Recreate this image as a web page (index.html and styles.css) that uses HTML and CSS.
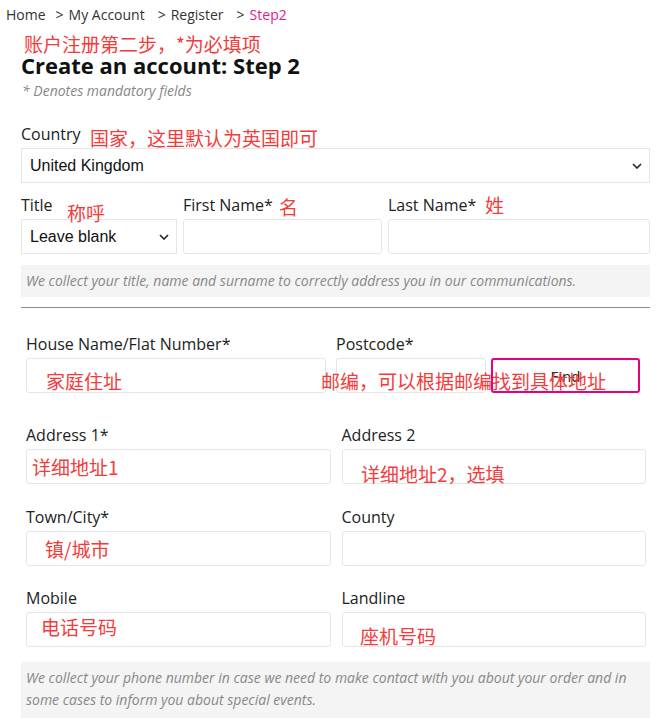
FILE: index.html
```html
<!DOCTYPE html>
<html lang="en">
<head>
<meta charset="UTF-8">
<meta name="viewport" content="width=device-width, initial-scale=1.0">
<title>Create an account: Step 2</title>
<link rel="stylesheet" href="styles.css">
</head>
<body>

<div class="breadcrumb">
  <a href="#">Home</a><span class="sep first">&gt;</span><a href="#">My Account</a><span class="sep">&gt;</span><a href="#">Register</a><span class="sep">&gt;</span><span class="current">Step2</span>
</div>

<div class="register-container">
  <h1>Create an account: Step 2</h1>
  <p class="mandatory">* Denotes mandatory fields</p>

  <div class="field country-field">
    <label for="country">Country</label>
    <div class="select-wrap">
      <select id="country">
        <option>United Kingdom</option>
      </select>
      <svg class="chevron" viewBox="0 0 10 6"><path d="M1 1 L5 5 L9 1" fill="none" stroke="#222" stroke-width="1.6"/></svg>
    </div>
  </div>

  <div class="name-row">
    <div class="field">
      <label for="title">Title</label>
      <div class="select-wrap">
        <select id="title">
          <option>Leave blank</option>
          <option>Mr</option>
          <option>Mrs</option>
          <option>Ms</option>
        </select>
        <svg class="chevron" viewBox="0 0 10 6"><path d="M1 1 L5 5 L9 1" fill="none" stroke="#222" stroke-width="1.6"/></svg>
      </div>
    </div>
    <div class="field">
      <label for="firstName">First Name*</label>
      <input type="text" id="firstName">
    </div>
    <div class="field">
      <label for="lastName">Last Name*</label>
      <input type="text" id="lastName">
    </div>
  </div>

  <div class="info-box">We collect your title, name and surname to correctly address you in our communications.</div>

  <hr class="divider">

  <div class="address-group">
    <div class="house-row">
      <div class="field house">
        <label for="house">House Name/Flat Number*</label>
        <input type="text" id="house">
      </div>
      <div class="field postcode">
        <label for="postcode">Postcode*</label>
        <div class="postcode-wrap">
          <input type="text" id="postcode">
          <button class="find-btn">Find</button>
        </div>
      </div>
    </div>

    <div class="two-col first">
      <div class="field">
        <label for="address1">Address 1*</label>
        <input type="text" id="address1">
      </div>
      <div class="field">
        <label for="address2">Address 2</label>
        <input type="text" id="address2">
      </div>
    </div>

    <div class="two-col">
      <div class="field">
        <label for="town">Town/City*</label>
        <input type="text" id="town">
      </div>
      <div class="field">
        <label for="county">County</label>
        <input type="text" id="county">
      </div>
    </div>

    <div class="two-col phone">
      <div class="field">
        <label for="mobile">Mobile</label>
        <input type="tel" id="mobile">
      </div>
      <div class="field">
        <label for="landline">Landline</label>
        <input type="tel" id="landline">
      </div>
    </div>
  </div>

  <div class="info-box info-phone">We collect your phone number in case we need to make contact with you about your order and in some cases to inform you about special events.</div>
</div>

<!-- red notes written over the screenshot -->
<span class="note note-step">账户注册第二步，*为必填项</span>
<span class="note note-country">国家，这里默认为英国即可</span>
<span class="note note-title">称呼</span>
<span class="note note-first">名</span>
<span class="note note-last">姓</span>
<span class="note note-house">家庭住址</span>
<span class="note note-postcode">邮编，可以根据邮编找到具体地址</span>
<span class="note note-addr1">详细地址1</span>
<span class="note note-addr2">详细地址2，选填</span>
<span class="note note-town">镇/城市</span>
<span class="note note-mobile">电话号码</span>
<span class="note note-landline">座机号码</span>

</body>
</html>
```

FILE: styles.css
```css
body {
  font-family: 'Open Sans', 'Noto Sans', sans-serif;
  background-color: #fff;
  color: #222;
  margin: 0;
  position: relative;
  min-height: 718px;
  overflow: hidden;
}
.breadcrumb {
  padding: 6px 0 0 6px;
  font-size: 14px;
  line-height: 18px;
  color: #333;
}
.breadcrumb a {
  color: #333;
  text-decoration: none;
}
.breadcrumb .sep {
  margin: 0 5px 0 13px;
}
.breadcrumb .sep.first {
  margin-left: 10px;
}
.breadcrumb .current {
  color: #e0218a;
}
.register-container {
  margin-left: 21px;
  width: 629px;
}
.register-container h1 {
  font-size: 22px;
  line-height: 28px;
  font-weight: 700;
  color: #111;
  margin: 27px 0 0 0;
}
.mandatory {
  font-size: 14px;
  line-height: 18px;
  font-style: italic;
  color: #888;
  margin: 3px 0 0 1px;
}
.field label {
  display: block;
  font-size: 16px;
  line-height: 22px;
  color: #222;
  margin-bottom: 3px;
}
.field input,
.field select {
  display: block;
  width: 100%;
  height: 35px;
  box-sizing: border-box;
  border: 1px solid #e6e6e6;
  border-radius: 3px;
  background-color: #fff;
  font-family: 'Liberation Sans', Arial, sans-serif;
  font-size: 16px;
  color: #111;
  padding: 0 8px;
  outline: none;
}
.field select {
  appearance: none;
  -webkit-appearance: none;
  border-radius: 0;
  padding-left: 8px;
}
.select-wrap {
  position: relative;
}
.select-wrap .chevron {
  position: absolute;
  right: 8px;
  top: 15px;
  width: 10px;
  height: 6px;
  pointer-events: none;
}
.country-field {
  margin-top: 23px;
}
.name-row {
  display: grid;
  grid-template-columns: 156px 199px 1fr;
  column-gap: 6px;
  margin-top: 11px;
}
.info-box {
  background-color: #f4f4f4;
  padding: 6px 5px 7px 5px;
  font-size: 14px;
  line-height: 19px;
  font-style: italic;
  color: #888;
  margin-top: 11px;
}
.divider {
  border: none;
  border-top: 1px solid #8c8c8c;
  margin: 10px 0 0 0;
}
.address-group {
  padding: 25px 4px 0 5px;
}
.house-row {
  display: flex;
  gap: 10px;
}
.house {
  width: 300px;
}
.postcode {
  width: 304px;
}
.postcode-wrap {
  display: flex;
  gap: 5px;
}
.postcode-wrap input {
  width: 150px;
}
.find-btn {
  width: 149px;
  height: 35px;
  box-sizing: border-box;
  border: 2px solid #e6007e;
  border-radius: 3px;
  background-color: #fff;
  font-family: 'Open Sans', sans-serif;
  font-size: 15px;
  color: #222;
  cursor: pointer;
}
.two-col {
  display: grid;
  grid-template-columns: 1fr 1fr;
  column-gap: 11px;
  margin-top: 22px;
}
.two-col.first {
  margin-top: 31px;
}
.two-col.phone {
  margin-top: 21px;
}
.info-phone {
  margin-top: 15px;
  padding: 5px 5px 8px 5px;
  line-height: 22px;
}
.note {
  position: absolute;
  font-family: 'Noto Sans CJK SC', 'Noto Sans', sans-serif;
  font-size: 19px;
  line-height: 20px;
  color: #f43b3b;
  white-space: nowrap;
}
.note-step { left: 24px; top: 34px; }
.note-country { left: 90px; top: 128px; }
.note-title { left: 67px; top: 203px; }
.note-first { left: 279px; top: 197px; }
.note-last { left: 485px; top: 195px; }
.note-house { left: 46px; top: 371px; }
.note-postcode { left: 321px; top: 371px; }
.note-addr1 { left: 32px; top: 457px; }
.note-addr2 { left: 361px; top: 464px; }
.note-town { left: 45px; top: 539px; }
.note-mobile { left: 41px; top: 617px; }
.note-landline { left: 360px; top: 626px; }
```
